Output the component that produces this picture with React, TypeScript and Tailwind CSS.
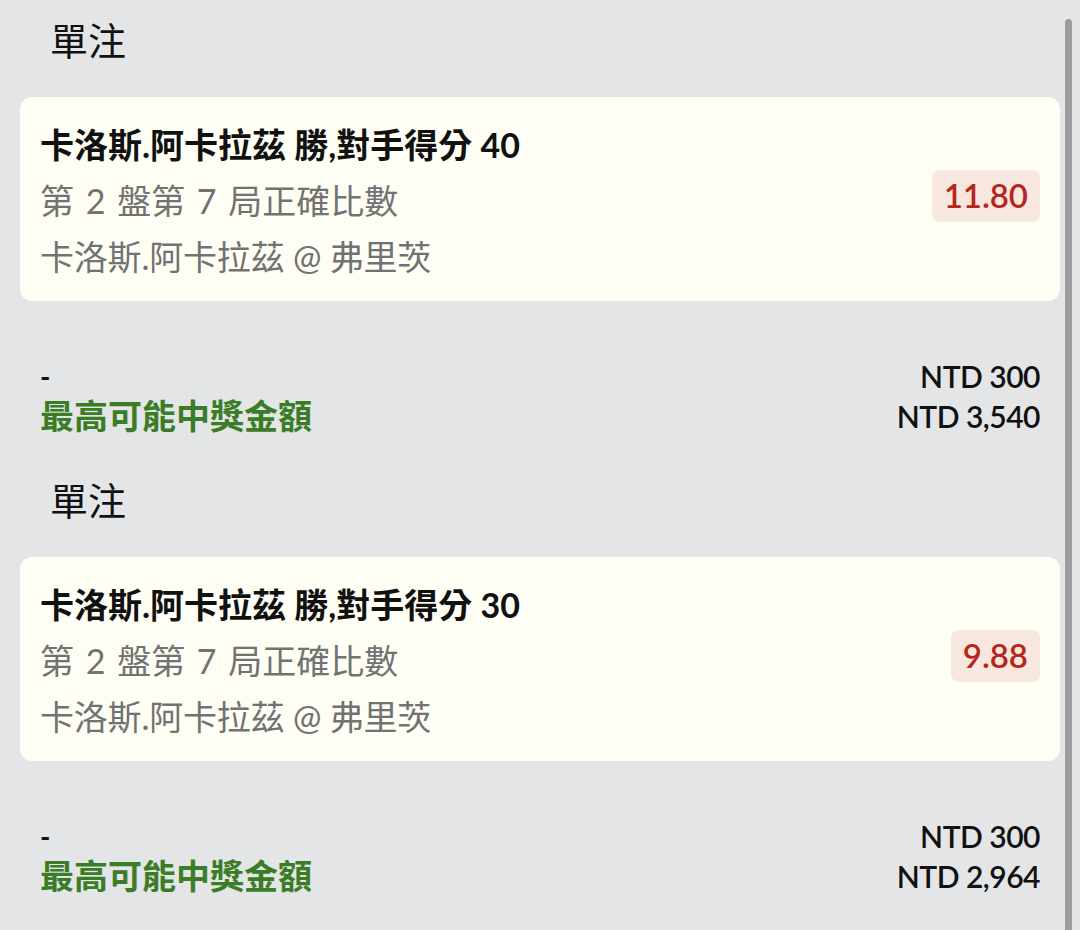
const font = { fontFamily: 'Lato, "Noto Sans CJK TC", sans-serif' };

type Bet = {
  title: string;
  market: string;
  event: string;
  odds: string;
  stake: string;
  payout: string;
};

const bets: Bet[] = [
  {
    title: "卡洛斯.阿卡拉茲 勝,對手得分 40",
    market: "第 2 盤第 7 局正確比數",
    event: "卡洛斯.阿卡拉茲 @ 弗里茨",
    odds: "11.80",
    stake: "NTD 300",
    payout: "NTD 3,540",
  },
  {
    title: "卡洛斯.阿卡拉茲 勝,對手得分 30",
    market: "第 2 盤第 7 局正確比數",
    event: "卡洛斯.阿卡拉茲 @ 弗里茨",
    odds: "9.88",
    stake: "NTD 300",
    payout: "NTD 2,964",
  },
];

const BetBlock = ({ bet, first }: { bet: Bet; first: boolean }) => (
  <div className={`px-5 ${first ? "pt-3" : "pt-9"}`}>
    {/* Section title */}
    <div className="pl-[30px] text-[38px] leading-[56px] text-[#111]">單注</div>

    {/* Selection card */}
    <div className="mt-[29px] h-[204px] rounded-xl bg-[#fefef5] pl-5 pr-5 pt-5 flex items-start justify-between">
      <div className="flex flex-col">
        <div className="text-[34px] leading-[56px] font-bold text-[#111]">{bet.title}</div>
        <div className="text-[34px] leading-[56px] text-[#727272] [word-spacing:3px]">{bet.market}</div>
        <div className="text-[34px] leading-[56px] text-[#727272] tracking-[-0.2px]">{bet.event}</div>
      </div>
      <div className="self-center -mt-[26px] h-[52px] px-[12px] rounded-lg bg-[#f8e7df] flex items-center text-[33px] font-semibold text-[#b5261c]">
        {bet.odds}
      </div>
    </div>

    {/* Stake + payout */}
    <div className="mt-[55px] px-5">
      <div className="flex justify-between items-center h-10">
        <span className="text-[28px] font-bold text-[#111] leading-10">-</span>
        <span className="text-[30px] font-semibold text-[#111] leading-10 tracking-[-0.5px]">{bet.stake}</span>
      </div>
      <div className="flex justify-between items-center h-10">
        <span className="text-[34px] font-bold text-[#3b7d26] leading-10">最高可能中獎金額</span>
        <span className="text-[30px] font-semibold text-[#111] leading-10 tracking-[-0.5px]">{bet.payout}</span>
      </div>
    </div>
  </div>
);

export default function App() {
  return (
    <div className="relative h-[930px] w-[1080px] overflow-hidden bg-[#e4e5e7]" style={font}>
      {bets.map((b, i) => (
        <BetBlock key={i} bet={b} first={i === 0} />
      ))}
      {/* scrollbar */}
      <div className="absolute right-[8px] top-[19px] h-[940px] w-[7px] rounded-full bg-[#9c9c9f]" />
    </div>
  );
}
